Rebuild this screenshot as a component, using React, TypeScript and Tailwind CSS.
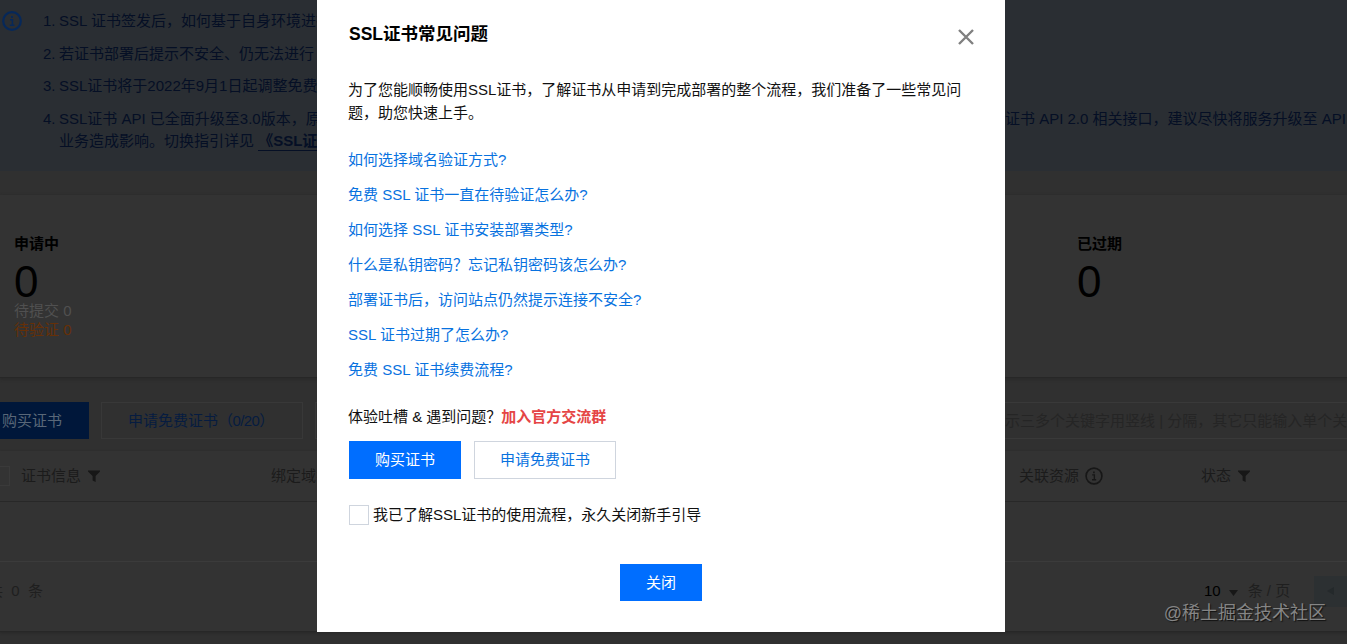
import React from 'react';

const links = [
  '如何选择域名验证方式?',
  '免费 SSL 证书一直在待验证怎么办?',
  '如何选择 SSL 证书安装部署类型?',
  '什么是私钥密码？忘记私钥密码该怎么办?',
  '部署证书后，访问站点仍然提示连接不安全?',
  'SSL 证书过期了怎么办?',
  '免费 SSL 证书续费流程?',
];

const InfoIcon: React.FC<{ className: string; size: number; stroke: number }> = ({ className, size, stroke }) => (
  <svg className={className} width={size} height={size} viewBox="0 0 20 20" fill="none" stroke="currentColor">
    <circle cx="10" cy="10" r="8.8" strokeWidth={stroke} />
    <path d="M8 8.7h2.4V14M7.8 14.2h4.6" strokeWidth="1.5" />
    <path d="M9 6h1.8" strokeWidth="1.8" />
  </svg>
);

const FilterIcon: React.FC = () => (
  <svg className="text-[#171717]" width="12" height="12" viewBox="0 0 12 12" fill="currentColor">
    <path d="M0 0.5h12v1L7.6 6V12L4.6 10.5V6L0 1.5z" />
  </svg>
);

const Notice: React.FC = () => (
  <div className="h-[171px] shrink-0 bg-[#2a2e33] pt-[10px] flex text-[#050f25]">
    <InfoIcon className="ml-[2px] mt-px shrink-0 text-[#06285a]" size={20} stroke={2.2} />
    <ol className="ml-[21px] flex-1 flex flex-col gap-[10px] leading-[22.5px]">
      <li className="flex"><span className="w-4 shrink-0">1.</span>SSL 证书签发后，如何基于自身环境进行</li>
      <li className="flex"><span className="w-4 shrink-0">2.</span>若证书部署后提示不安全、仍无法进行</li>
      <li className="flex"><span className="w-4 shrink-0">3.</span>SSL证书将于2022年9月1日起调整免费</li>
      <li className="flex">
        <span className="w-4 shrink-0">4.</span>
        <div>
          <div className="flex">
            <span className="w-[946px] shrink-0">SSL证书 API 已全面升级至3.0版本，原</span>
            <span>证书 API 2.0 相关接口，建议尽快将服务升级至 API</span>
          </div>
          <div>
            业务造成影响。切换指引详见{' '}
            <a href="#" className="font-bold inline-block h-[21px] leading-[22px] border-b border-[#050f25]">《SSL证书</a>
          </div>
        </div>
      </li>
    </ol>
  </div>
);

const Stats: React.FC = () => (
  <div className="mt-6 h-[183px] shrink-0 bg-[#333333] border-b border-[#272727] shadow-[0_1px_3px_#282828] pt-[38px] flex">
    <div className="w-[1063px] pl-[14px] shrink-0">
      <div className="font-bold text-black leading-[22px]">申请中</div>
      <div className="text-[44px] text-black leading-[40px] mt-[7px]">0</div>
      <div className="text-[#505050] leading-[19px] -mt-px">待提交 0</div>
      <div className="text-[#663007] leading-[19px]">待验证 0</div>
    </div>
    <div className="pl-[14px]">
      <div className="font-bold text-black leading-[22px]">已过期</div>
      <div className="text-[44px] text-black leading-[40px] mt-[7px]">0</div>
    </div>
  </div>
);

const Toolbar: React.FC = () => (
  <div className="mt-6 h-[37px] shrink-0 flex">
    <button className="w-[89px] shrink-0 bg-[#00173a] text-[#596778] text-left pl-[2px] pt-[2px]">购买证书</button>
    <button className="ml-3 w-[202px] shrink-0 border border-[#383838] text-[#061c40] text-left pl-[26px] pt-[2px]">
      申请免费证书<span className="tracking-[-0.6px]">（0/20）</span>
    </button>
    <div className="ml-3 w-[86px] shrink-0 border border-[#383838]" />
    <div className="ml-[604px] flex-1 border-y border-[#393939] text-[#252525] leading-[36px] whitespace-nowrap overflow-hidden">
      示三多个关键字用竖线 | 分隔，其它只能输入单个关键
    </div>
  </div>
);

const Table: React.FC = () => (
  <div className="mt-3 h-[181px] shrink-0 bg-[#333333] border-b border-[#272727] shadow-[0_1px_2px_#282828] text-[#1b1b1b]">
    <div className="h-[51px] border-b border-[#282828] flex items-center">
      <div className="w-[10px] h-5 border border-l-0 border-[#3a3a3a]" />
      <div className="w-[261px] pl-[11px] flex items-center gap-[7px]">证书信息 <FilterIcon /></div>
      <div className="w-[748px]">绑定域名</div>
      <div className="w-[182px] flex items-center gap-[6px]">
        关联资源 <InfoIcon className="text-[#171717]" size={18} stroke={1.8} />
      </div>
      <div className="flex items-center gap-[7px]">状态 <FilterIcon /></div>
    </div>
    <div className="h-[60px] border-b border-[#3b3b3b]" />
    <div className="h-[58px] flex items-center">
      <div className="w-[1204px] -ml-3 shrink-0 text-[#1f1f1f]">共&nbsp; 0&nbsp; 条</div>
      <div className="ml-3 flex items-center text-black">
        10
        <svg className="ml-2 mt-[3px] text-[#171717]" width="9" height="6" viewBox="0 0 9 6" fill="currentColor">
          <path d="M0 0h9L4.5 6z" />
        </svg>
        <span className="ml-[10px] text-[#1f1f1f] whitespace-nowrap">条 / 页</span>
      </div>
      <div className="ml-6 h-[31px] flex-1 bg-[#2c3032] flex items-center justify-center">
        <svg width="7" height="8" viewBox="0 0 7 8" fill="#24292b">
          <path d="M7 0v8L0 4z" />
        </svg>
      </div>
    </div>
  </div>
);

const Dialog: React.FC = () => (
  <div className="absolute left-[317px] top-0 w-[688px] h-[632px] bg-white px-[31px] text-[#111111] flex flex-col">
    <div className="flex justify-between pt-[22px]">
      <h3 className="text-[17.5px] text-black font-bold leading-6 pl-px">SSL证书常见问题</h3>
      <button className="h-6 mt-[3px] text-[#808080] -mr-[4px]">
        <svg width="24" height="24" viewBox="0 0 24 24" fill="none" stroke="currentColor" strokeWidth="2.4">
          <path d="M5 5l14 14M19 5L5 19" />
        </svg>
      </button>
    </div>
    <p className="mt-[30px] leading-[22.5px]">
      为了您能顺畅使用SSL证书，了解证书从申请到完成部署的整个流程，我们准备了一些常见问
      <br />
      题，助您快速上手。
    </p>
    <ul className="mt-[18px]">
      {links.map((text) => (
        <li key={text} className="h-[35px] leading-[35px] text-[#0872df]">
          <a href="#">{text}</a>
        </li>
      ))}
    </ul>
    <p className="mt-[18px] leading-[23px]">
      体验吐槽 &amp; 遇到问题？<a href="#" className="font-bold text-[#e54545]">加入官方交流群</a>
    </p>
    <div className="mt-[13px] ml-px flex gap-[13px]">
      <button className="w-28 h-[38px] bg-[#006eff] text-white">购买证书</button>
      <button className="w-[142px] h-[38px] border border-[#cfd5de] text-[#0872df]">申请免费证书</button>
    </div>
    <label className="mt-6 ml-px flex items-center gap-1 leading-[22px]">
      <span className="w-5 h-5 border border-[#cfd5de]" />
      <span className="pt-px">我已了解SSL证书的使用流程，永久关闭新手引导</span>
    </label>
    <button className="mt-[38px] w-[82px] h-[37px] self-center bg-[#006eff] text-white pt-px">关闭</button>
  </div>
);

const App: React.FC = () => {
  return (
    <div className="relative w-[1347px] h-[644px] overflow-hidden bg-[#303030] flex flex-col text-[15px] whitespace-nowrap font-['Liberation_Sans','Noto_Sans_CJK_SC',sans-serif]">
      <Notice />
      <Stats />
      <Toolbar />
      <Table />
      <Dialog />
      {/* Marca de agua */}
      <div className="absolute right-[21px] top-[600px] text-[18px] leading-[26px] text-[#858585] [text-shadow:1px_1px_1px_#111]">
        @稀土掘金技术社区
      </div>
    </div>
  );
};

export default App;
